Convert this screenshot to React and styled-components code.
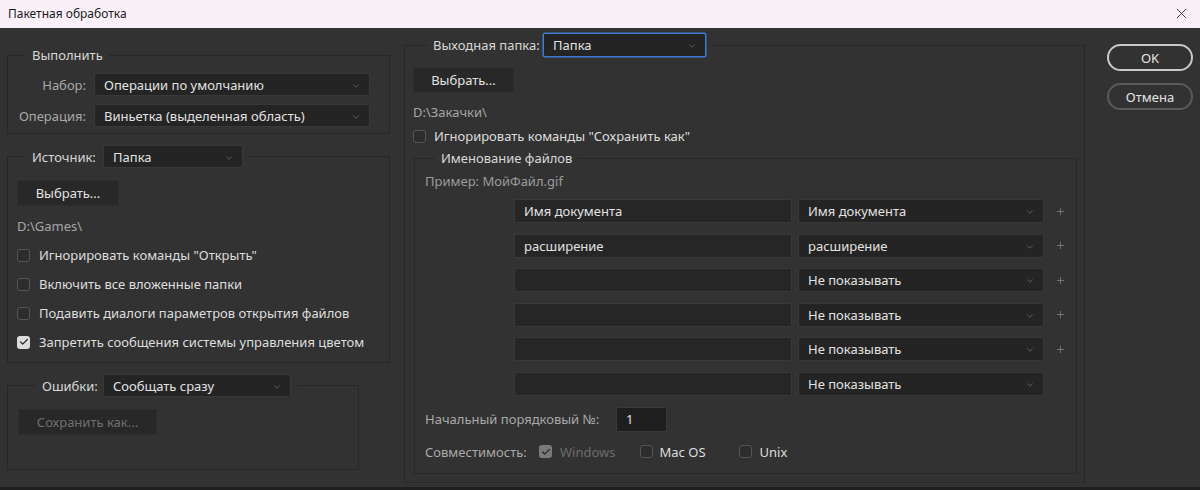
import React from 'react';
import styled, { createGlobalStyle, css } from 'styled-components';
import { ChevronDown, X, Plus, Check } from 'lucide-react';

const GlobalStyle = createGlobalStyle`
    html, body {
        margin: 0;
        padding: 0;
        background: #323232;
    }
    body {
        font-family: "Noto Sans", "Open Sans", sans-serif;
        font-size: 13px;
        color: #d8d8d8;
    }
`;

const Window = styled.div`
    width: 1200px;
    height: 490px;
    display: flex;
    flex-direction: column;
    overflow: hidden;
`;

const TitleBar = styled.div`
    height: 28px;
    flex: none;
    background-color: #f9f0f8;
    color: #1a1a1a;
    display: flex;
    align-items: center;
    justify-content: space-between;
    padding: 0 8px 2px 8px;
    box-sizing: border-box;
`;

const Title = styled.span`
    font-size: 12px;
`;

const CloseButton = styled.span`
    display: flex;
    margin-right: 2px;
    color: #222;
`;

const Body = styled.div`
    flex: 1;
    background-color: #323232;
    display: flex;
    align-items: flex-start;
    padding: 5px 0 0 7px;
    box-sizing: border-box;
`;

const BottomStrip = styled.div`
    height: 3px;
    flex: none;
    background-color: #1f1f1f;
`;

const LeftColumn = styled.div`
    width: 383px;
    display: flex;
    flex-direction: column;
    padding-top: 13px;
`;

const Group = styled.fieldset`
    margin: ${p => p.$mt || 0}px 0 0 ${p => p.$ml || 0}px;
    padding: 0;
    border: 1px solid #272727;
    min-width: 0;
    width: ${p => p.$width ? `${p.$width}px` : 'auto'};
    box-sizing: border-box;
`;

const Legend = styled.legend`
    margin-left: ${p => p.$offset}px;
    padding: 0 6px;
    color: #d8d8d8;
    line-height: 18px;
`;

const LegendRow = styled.div`
    display: flex;
    align-items: center;
`;

const LegendLabel = styled.span`
    width: ${p => p.$width}px;
    flex: none;
    white-space: nowrap;
`;

const GroupContent = styled.div`
    display: flex;
    flex-direction: column;
    align-items: flex-start;
    gap: ${p => p.$gap || 0}px;
    padding: ${p => p.$padding};
`;

const FieldRow = styled.div`
    display: flex;
    align-items: center;
    gap: 8px;
`;

const FieldLabel = styled.span`
    width: 69px;
    text-align: right;
    color: #a9a9a9;
`;

const DropdownBox = styled.div`
    width: ${p => p.$width}px;
    height: ${p => p.$height || 23}px;
    box-sizing: border-box;
    background-color: #242424;
    border: 1px solid ${p => (p.$focused ? '#3f7bd4' : '#383838')};
    border-radius: 2px;
    display: flex;
    align-items: center;
    justify-content: space-between;
    padding: 0 8px 0 9px;
    color: #e2e2e2;
    flex: none;
    ${p => p.$focused && css`box-shadow: 0 0 0 0.5px #3f7bd4;`}
`;

const Chevron = styled(ChevronDown)`
    color: #8c8c8c;
    margin-top: 2px;
`;

const Dropdown = ({ width, height, focused, children }) => (
    <DropdownBox $width={width} $height={height} $focused={focused}>
        <span>{children}</span>
        <Chevron size={10} strokeWidth={1.3} />
    </DropdownBox>
);

const Button = styled.div`
    width: ${p => p.$width}px;
    height: 26px;
    box-sizing: border-box;
    background-color: #282828;
    border: 1px solid #2e2e2e;
    border-radius: 2px;
    display: flex;
    align-items: center;
    justify-content: center;
    color: ${p => (p.$disabled ? '#6f6f6f' : '#e2e2e2')};
`;

const PathText = styled.div`
    line-height: 18px;
    color: #a6a6a6;
`;

const CheckRow = styled.label`
    display: flex;
    align-items: center;
    gap: ${p => p.$gap || 9}px;
    line-height: 18px;
    color: ${p => (p.$disabled ? '#6c6c6c' : '#dedede')};
`;

const Box = styled.span`
    width: 13px;
    height: 13px;
    box-sizing: border-box;
    border-radius: 3px;
    display: flex;
    align-items: center;
    justify-content: center;
    flex: none;
    border: 1px solid ${p => (p.$checked ? 'transparent' : '#555')};
    background-color: ${p => (p.$checked ? (p.$disabled ? '#7a7a7a' : '#dcdcdc') : '#2d2d2d')};
    color: #2a2a2a;
`;

const Checkbox = ({ checked, disabled, gap, children }) => (
    <CheckRow $disabled={disabled} $gap={gap}>
        <Box $checked={checked} $disabled={disabled}>
            {checked && <Check size={10} strokeWidth={3} />}
        </Box>
        {children}
    </CheckRow>
);

const MiddleContent = styled.div`
    display: flex;
    flex-direction: column;
    align-items: stretch;
    padding: 10px 7px 8px 8px;
`;

const Stack = styled.div`
    display: flex;
    flex-direction: column;
    align-items: flex-start;
    gap: ${p => p.$gap}px;
    margin-top: ${p => p.$mt || 0}px;
`;

const NamingContent = styled.div`
    display: flex;
    flex-direction: column;
    padding: 5px 8px 12px 10px;
`;

const HintText = styled.div`
    line-height: 18px;
    color: #9c9c9c;
`;

const NameRows = styled.div`
    display: flex;
    flex-direction: column;
    gap: 10.6px;
    margin: 9px 0 0 89px;
`;

const NameRow = styled.div`
    display: flex;
    align-items: center;
    gap: 6px;
`;

const TextInput = styled.div`
    width: ${p => p.$width}px;
    height: ${p => p.$height || 24}px;
    box-sizing: border-box;
    background-color: ${p => p.$dark ? '#1e1e1e' : '#262626'};
    border: 1px solid #393939;
    border-radius: 1px;
    display: flex;
    align-items: center;
    padding: 0 9px;
    color: #e2e2e2;
    flex: none;
`;

const PlusSlot = styled.span`
    width: 20px;
    display: flex;
    justify-content: center;
    color: #9a9a9a;
    margin-left: 2px;
`;

const SeqRow = styled.div`
    display: flex;
    align-items: center;
    margin-top: 11px;
    gap: 10px;
`;

const MutedLabel = styled.span`
    color: #a9a9a9;
    width: ${p => p.$width ? `${p.$width}px` : 'auto'};
    flex: none;
`;

const CompatRow = styled.div`
    display: flex;
    align-items: center;
    margin-top: 11px;
`;

const CompatItem = styled.div`
    margin-left: ${p => p.$ml}px;
`;

const ButtonColumn = styled.div`
    display: flex;
    flex-direction: column;
    gap: 12px;
    margin: 11px 0 0 22px;
`;

const PillButton = styled.div`
    width: 86px;
    height: 27px;
    box-sizing: border-box;
    border-radius: 14px;
    border: 2px solid ${p => (p.$primary ? '#c9c9c9' : '#5a5a5a')};
    display: flex;
    align-items: center;
    justify-content: center;
    color: #e4e4e4;
    font-size: 13px;
`;

const nameRows = [
    { text: 'Имя документа', choice: 'Имя документа', plus: true },
    { text: 'расширение', choice: 'расширение', plus: true },
    { text: '', choice: 'Не показывать', plus: true },
    { text: '', choice: 'Не показывать', plus: true },
    { text: '', choice: 'Не показывать', plus: true },
    { text: '', choice: 'Не показывать', plus: false },
];

export default function App() {
    return (
        <Window>
            <GlobalStyle />
            <TitleBar>
                <Title>Пакетная обработка</Title>
                <CloseButton><X size={17} strokeWidth={1.2} /></CloseButton>
            </TitleBar>
            <Body>
                <LeftColumn>
                    <Group>
                        <Legend $offset={18}>Выполнить</Legend>
                        <GroupContent $gap={8} $padding="9px 0 6px 9px">
                            <FieldRow>
                                <FieldLabel>Набор:</FieldLabel>
                                <Dropdown width={276}>Операции по умолчанию</Dropdown>
                            </FieldRow>
                            <FieldRow>
                                <FieldLabel>Операция:</FieldLabel>
                                <Dropdown width={276}>Виньетка (выделенная область)</Dropdown>
                            </FieldRow>
                        </GroupContent>
                    </Group>

                    <Group $mt={11}>
                        <Legend $offset={18}>
                            <LegendRow>
                                <LegendLabel $width={71}>Источник:</LegendLabel>
                                <Dropdown width={140}>Папка</Dropdown>
                            </LegendRow>
                        </Legend>
                        <GroupContent $padding="12px 0 11px 9px">
                            <Button $width={102}>Выбрать...</Button>
                            <Stack $gap={11} $mt={11}>
                                <PathText>D:\Games\</PathText>
                                <Checkbox>Игнорировать команды "Открыть"</Checkbox>
                                <Checkbox>Включить все вложенные папки</Checkbox>
                                <Checkbox>Подавить диалоги параметров открытия файлов</Checkbox>
                                <Checkbox checked>Запретить сообщения системы управления цветом</Checkbox>
                            </Stack>
                        </GroupContent>
                    </Group>

                    <Group $mt={11} $width={352}>
                        <Legend $offset={28}>
                            <LegendRow>
                                <LegendLabel $width={61}>Ошибки:</LegendLabel>
                                <Dropdown width={188}>Сообщать сразу</Dropdown>
                            </LegendRow>
                        </Legend>
                        <GroupContent $padding="12px 0 34px 10px">
                            <Button $width={139} $disabled>Сохранить как...</Button>
                        </GroupContent>
                    </Group>
                </LeftColumn>

                <Group $width={681} $ml={14}>
                    <Legend $offset={22}>
                        <LegendRow>
                            <LegendLabel $width={110}>Выходная папка:</LegendLabel>
                            <Dropdown width={163} height={24} focused>Папка</Dropdown>
                        </LegendRow>
                    </Legend>
                    <MiddleContent>
                        <Stack $gap={6}>
                            <Button $width={101}>Выбрать...</Button>
                            <PathText style={{ marginTop: 4 }}>D:\Закачки\</PathText>
                            <Checkbox gap={8}>Игнорировать команды "Сохранить как"</Checkbox>
                        </Stack>
                        <Group $mt={4} $ml={1}>
                            <Legend $offset={20}>Именование файлов</Legend>
                            <NamingContent>
                                <HintText>Пример: МойФайл.gif</HintText>
                                <NameRows>
                                    {nameRows.map((row, i) => (
                                        <NameRow key={i}>
                                            <TextInput $width={278}>{row.text}</TextInput>
                                            <Dropdown width={246} height={24}>{row.choice}</Dropdown>
                                            <PlusSlot>
                                                {row.plus && <Plus size={11} strokeWidth={1.3} />}
                                            </PlusSlot>
                                        </NameRow>
                                    ))}
                                </NameRows>
                                <SeqRow>
                                    <MutedLabel $width={181}>Начальный порядковый №:</MutedLabel>
                                    <TextInput $width={51} $height={25} $dark>1</TextInput>
                                </SeqRow>
                                <CompatRow>
                                    <MutedLabel $width={114}>Совместимость:</MutedLabel>
                                    <Checkbox checked disabled gap={8}>Windows</Checkbox>
                                    <CompatItem $ml={24}>
                                        <Checkbox gap={7}>Mac OS</Checkbox>
                                    </CompatItem>
                                    <CompatItem $ml={33}>
                                        <Checkbox gap={8}>Unix</Checkbox>
                                    </CompatItem>
                                </CompatRow>
                            </NamingContent>
                        </Group>
                    </MiddleContent>
                </Group>

                <ButtonColumn>
                    <PillButton $primary>OK</PillButton>
                    <PillButton>Отмена</PillButton>
                </ButtonColumn>
            </Body>
            <BottomStrip />
        </Window>
    );
}
